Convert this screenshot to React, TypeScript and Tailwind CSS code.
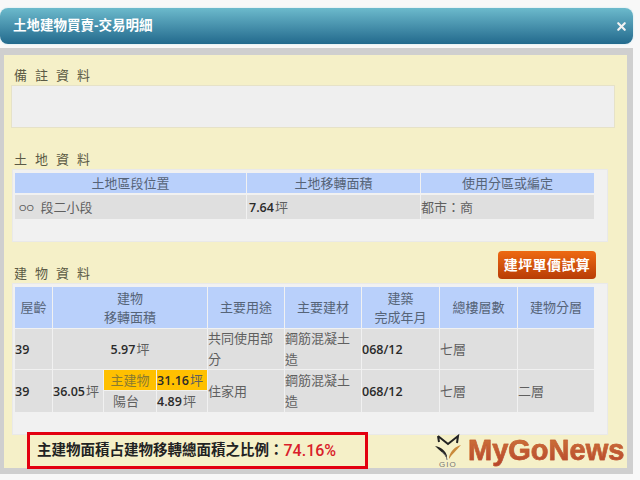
import { ReactNode } from "react";
import { X } from "lucide-react";

const cjk = "font-['Liberation_Sans','Noto_Sans_CJK_TC',sans-serif]";
const num = "font-['Open_Sans','Noto_Sans_CJK_TC',sans-serif]";

function SectionLabel({ children, className }: { children: string; className: string }) {
    return <div className={`ml-[3px] h-4 text-[13px] leading-4 tracking-[2.2px] text-[#5b5a45] ${className}`}>{children}</div>;
}

function Head({ children }: { children: ReactNode }) {
    return <div className="flex items-center justify-center bg-[#b9d0fb] text-center text-[13px] leading-[19px] text-[#566478]">{children}</div>;
}

function Cell({ children, className = "" }: { children?: ReactNode; className?: string }) {
    return <div className={`flex items-center bg-[#dfdfdf] text-[13px] leading-[21px] text-[#5f5f5f] ${className}`}>{children}</div>;
}

function Num({ children }: { children: string }) {
    return <span className={`${num} mr-[1px] text-[12.5px] font-semibold text-[#2a2a2a]`}>{children}</span>;
}

function Logo() {
    return (
        <div className="absolute top-[432px] left-[435px] flex h-9 w-[192px] items-center">
            <svg width="27" height="34" viewBox="0 0 27 34" fill="none" className="shrink-0">
                <path d="M3 3 L13 11 L23 3 L22 10 M3 3 L4 9" stroke="#222" strokeWidth="2" />
                <path d="M0 13 C6 14 11 18 12 23 L12 26 C10 21 5 18 0 13Z" fill="#222" />
                <path d="M26 12 C20 14 16 17 14 24 L14 26 C17 21 21 18 26 12Z" fill="#c98a3c" />
                <path d="M7 19 C10 21 12 24 12 27" stroke="#777" strokeWidth="1" />
                <text x="4" y="33.5" fontSize="8" fill="#777" fontFamily="Liberation Sans" letterSpacing="1">GIO</text>
            </svg>
            <span className="ml-[6px] bg-linear-to-b from-[#d07a3c] to-[#b4402a] bg-clip-text text-[29px] leading-9 font-bold whitespace-nowrap text-transparent [-webkit-text-stroke:0.5px_#c2582f]">
                MyGoNews
            </span>
        </div>
    );
}

export default function App() {
    return (
        <div className={`relative h-[480px] w-[640px] overflow-hidden bg-[#f8f8f8] pt-2 ${cjk}`}>
            <div className="flex h-9 w-[633px] items-center justify-between rounded-lg bg-linear-to-b from-[#6cbacc] to-[#226a8d] pr-[5px] pl-[13px] shadow-[0_0_2px_#bfe3ea]">
                <span className="text-[13.5px] font-bold text-white">土地建物買賣-交易明細</span>
                <X size={13} strokeWidth={4} className="text-[#f2f2f2]" />
            </div>

            <div className="mt-1 h-[426px] w-[633px] border-t-[7px] border-r-[6px] border-b-[6px] border-l-[4px] border-[#cfcfcf] bg-[#f5f0c8] pl-[7px]">
                <SectionLabel className="mt-[13px]">備 註 資 料</SectionLabel>
                <div className="mt-[1px] h-[43px] w-[604px] border border-[#e6e2c8] bg-[#efefef]" />

                <SectionLabel className="mt-6">土 地 資 料</SectionLabel>
                <div className="mt-[1px] ml-[1px] h-[73px] w-[596px] border border-[#e9e9e9] bg-[#f1f1f1] pt-[3px] pl-[2px]">
                    <div className="grid w-[579px] grid-cols-[231px_173px_173px] grid-rows-[20px_24px] gap-x-[1px] gap-y-[2px]">
                        <Head>土地區段位置</Head>
                        <Head>土地移轉面積</Head>
                        <Head>使用分區或編定</Head>
                        <Cell className="pl-[4px]"><span className="mr-[3px] text-[9.5px]">OO</span>&nbsp;段二小段</Cell>
                        <Cell className="pl-[2px]"><Num>7.64</Num>坪</Cell>
                        <Cell>都市：商</Cell>
                    </div>
                </div>

                <div className="mt-[9px] flex h-[28px] w-[585px] items-start justify-between">
                    <SectionLabel className="mt-[15px]">建 物 資 料</SectionLabel>
                    <div className="flex h-7 w-[98px] items-center justify-center rounded-[4px] bg-linear-to-b from-[#ee6a12] to-[#b83c06] text-[14px] font-bold tracking-[0.4px] text-white">
                        建坪單價試算
                    </div>
                </div>
                <div className="mt-[4px] ml-[1px] h-[152px] w-[596px] border border-[#e9e9e9] bg-[#f1f1f1] pt-[3px] pl-[2px]">
                    <div className="grid w-[579px] grid-cols-[37px_154px_76px_76px_77px_77px_76px] grid-rows-[41px_40px_42px] gap-[1px]">
                        <Head>屋齡</Head>
                        <Head><span>建物<br />移轉面積</span></Head>
                        <Head>主要用途</Head>
                        <Head>主要建材</Head>
                        <Head><span>建築<br />完成年月</span></Head>
                        <Head>總樓層數</Head>
                        <Head>建物分層</Head>

                        <Cell><Num>39</Num></Cell>
                        <Cell className="justify-center"><Num>5.97</Num>坪</Cell>
                        <Cell>共同使用部分</Cell>
                        <Cell>鋼筋混凝土造</Cell>
                        <Cell><Num>068/12</Num></Cell>
                        <Cell>七層</Cell>
                        <Cell />

                        <Cell><Num>39</Num></Cell>
                        <div className="grid grid-cols-[50px_52px_50px] grid-rows-[20px_21px] gap-[1px] bg-[#f1f1f1]">
                            <Cell className="row-span-2"><Num>36.05</Num>坪</Cell>
                            <Cell className="justify-center bg-[#ffc000]! text-[#8a7a30]!">主建物</Cell>
                            <Cell className="bg-[#ffc000]!"><Num>31.16</Num>坪</Cell>
                            <Cell className="pl-[9px]">陽台</Cell>
                            <Cell><Num>4.89</Num>坪</Cell>
                        </div>
                        <Cell>住家用</Cell>
                        <Cell>鋼筋混凝土造</Cell>
                        <Cell><Num>068/12</Num></Cell>
                        <Cell>七層</Cell>
                        <Cell>二層</Cell>
                    </div>
                </div>
            </div>

            <div className="absolute top-[432px] left-[27px] flex h-[37px] w-[341px] items-center border-[3px] border-[#e3000f] bg-[#f5f0c8] pl-[7px] text-[14.5px] font-bold whitespace-nowrap text-[#222]">
                主建物面積占建物移轉總面積之比例：
                <span className="font-['Roboto',sans-serif] text-[16px] font-medium text-[#d9202a]">74.16%</span>
            </div>
            <Logo />
        </div>
    );
}
